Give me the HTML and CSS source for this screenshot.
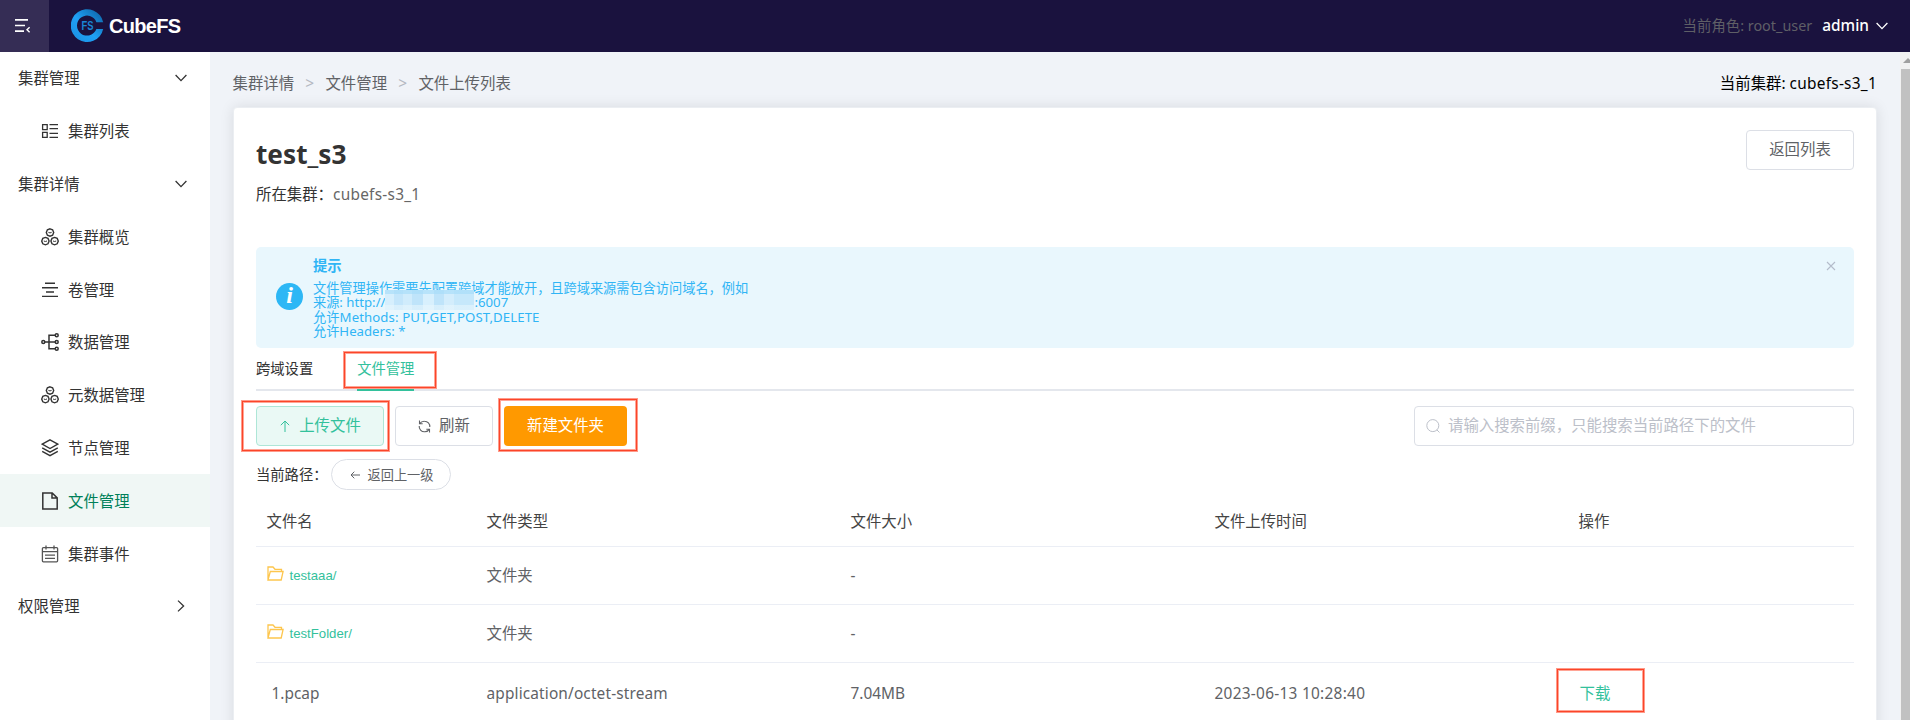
FILE: index.html
```html
<!DOCTYPE html>
<html lang="zh-CN">
<head>
<meta charset="utf-8">
<title>CubeFS</title>
<link rel="stylesheet" href="styles.css">
</head>
<body>
<svg class="defs" width="0" height="0">
  <symbol id="down" viewBox="0 0 12 8"><path d="M.6 1 6 6.6 11.4 1" fill="none" stroke="currentColor" stroke-width="1.3"/></symbol>
  <symbol id="cluster" viewBox="0 0 18 18"><g fill="none" stroke="currentColor" stroke-width="1.4"><path d="M9 .8l2.6 1 1.1 2.7-1.1 2.7-2.6 1-2.6-1-1.1-2.7 1.1-2.7zM4.4 9.4l2.6 1 1.1 2.7L7 15.8l-2.6 1-2.6-1L.7 13.1l1.1-2.7zM13.6 9.4l2.6 1 1.1 2.7-1.1 2.7-2.6 1-2.6-1-1.1-2.7 1.1-2.7z"/><path d="M7.4 4.4q1.6 1 3.2 0M2.8 13q1.6 1 3.2 0M12 13q1.6 1 3.2 0" stroke-width="1"/></g></symbol>
  <symbol id="folder" viewBox="0 0 17 15"><path d="M1 14V1h5l2 2.3h6.5v2.2M1 14l2.3-8.5h12.8L14.2 14z" fill="none" stroke="#fdc64e" stroke-width="1.3"/></symbol>
</svg>
<header class="topbar">
  <div class="toggle"><svg width="16" height="14" viewBox="0 0 16 14"><path d="M0 .9h13M0 6.5h10M0 12.2h9" stroke="#fff" stroke-width="1.7"/><path d="M14.6 8.3 12 10.8l2.6 2.5" fill="none" stroke="#fff" stroke-width="1.4"/></svg></div>
  <svg class="logo" width="33" height="34" viewBox="0 0 33 34">
    <defs><linearGradient id="lg" x1="0" y1="1" x2="1" y2="0"><stop offset="0" stop-color="#1b8fe0"/><stop offset=".45" stop-color="#1fa0f5"/><stop offset="1" stop-color="#0b5e9e"/></linearGradient></defs>
    <path d="M32.2 13.2A16.4 16.4 0 1 0 32.2 20H25.4A10 10 0 1 1 25.4 13.2Z" fill="url(#lg)"/>
    <text x="10.4" y="21" class="logo-fs" textLength="12" lengthAdjust="spacingAndGlyphs">FS</text>
  </svg>
  <span class="brand">CubeFS</span>
  <div class="user"><span class="role">当前角色: root_user</span><b>admin</b><svg width="12" height="8"><use href="#down"/></svg></div>
</header>
<div class="body">
<nav class="side">
  <div class="group">集群管理<svg width="12" height="8"><use href="#down"/></svg></div>
  <div class="item"><svg width="18" height="18" viewBox="0 0 18 18"><g fill="none" stroke="currentColor" stroke-width="1.3"><path d="M1.6 2.6h4.6v5H1.6zM1.6 10.4h4.6v5H1.6z"/><path d="M8.5 2.6h8.5M8.5 6.6h8.5M8.5 11.4h8.5M8.5 15.4h8.5"/></g></svg>集群列表</div>
  <div class="group">集群详情<svg width="12" height="8"><use href="#down"/></svg></div>
  <div class="item"><svg width="18" height="18"><use href="#cluster"/></svg>集群概览</div>
  <div class="item"><svg width="18" height="18" viewBox="0 0 18 18"><path d="M4 2.2h10M1 6.8h16M5 11h8M1 15.4h16" stroke="currentColor" stroke-width="1.4"/></svg>卷管理</div>
  <div class="item"><svg width="18" height="18" viewBox="0 0 18 18"><g fill="none" stroke="currentColor" stroke-width="1.5"><circle cx="2.3" cy="9" r="1.5"/><circle cx="15.7" cy="2.3" r="1.5"/><circle cx="15.7" cy="9" r="1.5"/><circle cx="15.7" cy="15.7" r="1.5"/><path d="M3.8 9h10.4M14.2 2.3H8v13.4h6.2"/></g></svg>数据管理</div>
  <div class="item"><svg width="18" height="18"><use href="#cluster"/></svg>元数据管理</div>
  <div class="item"><svg width="18" height="18" viewBox="0 0 18 18"><g fill="none" stroke="currentColor" stroke-width="1.4"><path d="M9 .9l7.8 4.3L9 9.5 1.2 5.2zM1.2 8.8L9 13.1l7.8-4.3M1.2 12.4L9 16.7l7.8-4.3"/></g></svg>节点管理</div>
  <div class="item active"><svg width="18" height="18" viewBox="0 0 18 18"><path d="M1.8.9h9.4l5 5v11.2H1.8zM11 .9v5.2h5.2" fill="none" stroke="#333" stroke-width="1.5"/></svg>文件管理</div>
  <div class="item"><svg width="18" height="18" viewBox="0 0 18 18"><g fill="none" stroke="#555" stroke-width="1.3"><rect x="1.4" y="2.6" width="15.2" height="14.2" rx="1"/><path d="M1.4 6.7h15.2M5 .4v4M13 .4v4M4 10.2h10M4 13.4h10"/></g></svg>集群事件</div>
  <div class="group">权限管理<svg class="right" width="12" height="8"><use href="#down"/></svg></div>
</nav>
<main class="main">
  <div class="crumbs"><span>集群详情</span><em>&gt;</em><span>文件管理</span><em>&gt;</em><span>文件上传列表</span><div class="current">当前集群: <i>cubefs-s3_1</i></div></div>
  <section class="card">
    <div class="head"><div><h1>test_s3</h1><p>所在集群：<i>cubefs-s3_1</i></p></div><button class="btn back">返回列表</button></div>
    <div class="alert">
      <span class="info">i</span>
      <div class="tip"><strong>提示</strong>
        <div>文件管理操作需要先配置跨域才能放开，且跨域来源需包含访问域名，例如</div>
        <div class="source">来源: http://<span class="mosaic"></span>:6007</div>
        <div class="methods">允许Methods: PUT,GET,POST,DELETE</div>
        <div>允许Headers: *</div></div>
      <svg class="close" width="10" height="10" viewBox="0 0 10 10"><path d="M1 1l8 8M9 1L1 9" stroke="#b4bcca" stroke-width="1.1"/></svg>
    </div>
    <div class="tabs"><span>跨域设置</span><span class="on">文件管理<i class="mark mark-tab"></i></span></div>
    <div class="tools">
      <button class="btn upload"><svg width="10" height="12" viewBox="0 0 10 12"><path d="M5 12V1M.8 5.2 5 1l4.2 4.2" fill="none" stroke="currentColor"/></svg>上传文件<i class="mark mark-upload"></i></button>
      <button class="btn refresh"><svg width="13" height="13" viewBox="0 0 13 13"><path d="M1.5 .6v3.2h3.2M1.8 3.6A5.2 5.2 0 0 1 6.5 1.2 5.3 5.3 0 0 1 11.8 7M11.5 12.4V9.2H8.3M11.2 9.4a5.2 5.2 0 0 1-4.7 2.4A5.3 5.3 0 0 1 1.2 6" fill="none" stroke="currentColor" stroke-width="1.1"/></svg>刷新</button>
      <button class="btn create">新建文件夹<i class="mark mark-create"></i></button>
      <div class="search"><svg width="14" height="14" viewBox="0 0 14 14"><circle cx="6.8" cy="6.6" r="6" fill="none" stroke="currentColor"/><path d="M10.8 10.8l2.7 2.7" stroke="currentColor"/></svg><span>请输入搜索前缀，只能搜索当前路径下的文件</span></div>
    </div>
    <div class="path">当前路径：<button class="pill"><svg width="10" height="8" viewBox="0 0 10 8"><path d="M10 4H1M4.3.7 1 4l3.3 3.3" fill="none" stroke="currentColor"/></svg>返回上一级</button></div>
    <div class="table">
      <div class="row th"><span>文件名</span><span>文件类型</span><span>文件大小</span><span>文件上传时间</span><span>操作</span></div>
      <div class="row"><span class="folder"><svg width="17" height="15"><use href="#folder"/></svg>testaaa/</span><span>文件夹</span><span>-</span><span></span><span></span></div>
      <div class="row"><span class="folder"><svg width="17" height="15"><use href="#folder"/></svg>testFolder/</span><span>文件夹</span><span>-</span><span></span><span></span></div>
      <div class="row last"><span class="file">1.pcap</span><span class="type">application/octet-stream</span><span>7.04MB</span><span class="time">2023-06-13 10:28:40</span><span class="download">下载<i class="mark mark-download"></i></span></div>
    </div>
  </section>
</main>
<div class="scroll"><svg width="10" height="17" viewBox="0 0 10 17"><path d="M3 11l5-5 5 5z" fill="#a0a0a0"/></svg><div class="thumb"></div></div>
</div>
</body>
</html>
```
FILE: styles.css
```css
* { box-sizing: border-box; }
body { margin: 0; width: 1910px; height: 720px; overflow: hidden; font: 15.4px/20px "Noto Sans", "Noto Sans CJK SC", sans-serif; font-weight: 400; color: #333; }
i { font-style: normal; }
button { font: inherit; margin: 0; }
svg { flex: none; display: block; }
.defs { position: absolute; }
.topbar { height: 52px; background: #1a123e; display: flex; align-items: center; color: #fff; }
.toggle { width: 49px; height: 52px; background: #352d55; padding: 19px 0 0 15px; }
.logo { margin-left: 22px; }
.logo-fs { font: bold 12px "Liberation Sans", sans-serif; fill: #1a86d4; }
.brand { margin-left: 5px; font: bold 20px/24px "Liberation Sans", sans-serif; letter-spacing: -.7px; }
.user { margin-left: auto; padding-right: 22px; display: flex; align-items: center; }
.role { color: #5f5f66; font-size: 14.4px; }
.user b { font-weight: 500; margin: 0 7px 0 10px; }
.body { display: flex; height: 668px; background: #f0f3f8; }
.side { width: 210px; background: #fff; }
.group, .item { height: 52.8px; display: flex; align-items: center; padding-top: 2px; }
.group { padding-left: 18px; padding-right: 23px; justify-content: space-between; }
.group svg, .item svg { margin-bottom: 2px; }
.right { transform: rotate(-90deg); }
.item { padding-left: 41px; gap: 9px; }
.active { background: #f0f7f5; color: #008059; }
.main { flex: 1; padding: 0 23px; }
.crumbs { height: 55px; display: flex; align-items: center; padding-top: 8px; color: #606266; margin-left: -.5px; }
.crumbs em { font-style: normal; color: #b5b9c2; width: 31.4px; text-align: center; }
.current { margin-left: auto; color: #000; }
.current i, .head i { letter-spacing: .27px; }
.card { height: 640px; background: #fff; border: 1px solid #ebeef2; border-radius: 4px; box-shadow: 0 0 14px rgba(0,0,0,.1); padding: 22px; }
.head { display: flex; justify-content: space-between; height: 117px; }
h1 { margin: 7px 0 0; font-size: 26.2px; line-height: 34px; font-weight: 700; }
.head p { margin: 14px 0 0; }
.head p i { color: #666; }
.btn { height: 40px; border: 1px solid #dcdfe6; border-radius: 4px; background: #fff; color: #606266; display: flex; align-items: center; justify-content: center; padding: 0; }
.back { width: 108px; }
.alert { height: 101px; background: #e9f7fd; border-radius: 5px; color: #30b5f5; display: flex; padding: 9px 18px 0 20px; }
.info { width: 27px; height: 27px; margin: 27px 10px 0 0; border-radius: 50%; background: #2db7f5; color: #fff; font: italic bold 24px/25px "Liberation Serif", serif; text-align: center; }
.tip { font-size: 13.2px; line-height: 14.5px; }
.tip strong { display: block; font-size: 14.3px; line-height: 20px; margin-bottom: 4.5px; }
.source { display: flex; white-space: pre; }
.methods { letter-spacing: .1px; }
.mosaic { width: 89px; height: 20px; margin: -5px 0 -9px; background: linear-gradient(#a5dcf9a0 0 4px, transparent 4px 15px, #e9f7fd90 15px), linear-gradient(90deg, #d6effd 0 10%, #c4e6fb 10% 20%, #d0ecfc 20% 30%, #bfe4fa 30% 43%, #d8f0fd 43% 55%, #bfe4fa 55% 66%, #d3edfc 66% 77%, #c6e8fb 77%); }
.close { margin: 5px 0 0 auto; }
.tabs { height: 43px; border-bottom: 2px solid #e4e7ed; display: flex; gap: 44px; font-size: 14.3px; }
.tabs span { position: relative; height: 43px; line-height: 42px; }
.tabs .on { color: #33c19c; border-bottom: 2px solid #33c19c; }
.tools { margin-top: 15px; height: 40px; display: flex; }
.tools .btn { position: relative; }
.tools .upload { width: 128px; gap: 9px; padding-left: 1px; background: #eaf9f5; border-color: #aee6d7; color: #33c19c; }
.refresh { width: 98px; margin: 0 11px; gap: 8px; }
.tools .create { width: 123px; background: #f90; border: 0; color: #fff; }
.search { width: 440px; margin-left: auto; border: 1px solid #dcdfe6; border-radius: 4px; display: flex; align-items: center; padding-left: 11px; gap: 8px; color: #bcc0c9; }
.path { margin-top: 13px; height: 31px; display: flex; align-items: center; font-size: 14.3px; }
.pill { margin-left: 4px; width: 120px; height: 31px; border: 1px solid #dcdfe6; border-radius: 16px; background: #fff; color: #606266; font-size: 13.2px; display: flex; align-items: center; justify-content: center; gap: 8px; padding: 0; }
.table { margin-top: 6px; }
.row { display: grid; grid-template-columns: 220px 364px 364px 364px 1fr; height: 58px; align-items: center; border-bottom: 1px solid #ebeef5; color: #606266; padding: 1px 0 0 10.5px; }
.row.th { height: 51px; color: #444; padding-top: 2px; }
.row.last { height: 61px; padding-top: 2px; }
.folder { display: flex; align-items: center; gap: 6px; font: 13.2px "Liberation Sans", sans-serif; color: #33c19c; padding-bottom: 2px; }
.folder svg { margin-bottom: 4px; }
.file { padding-left: 5px; }
.type { letter-spacing: .15px; }
.time { letter-spacing: .28px; }
.download { position: relative; color: #33c19c; padding-left: 1px; }
.mark { position: absolute; border: 1px solid #fb4529; box-shadow: 0 0 0 1px #ff9a8a, inset 0 0 0 1px #ffa596; }
.mark-tab { left: -13px; top: 4px; width: 92px; height: 36px; }
.mark-upload { left: -15px; top: -6px; width: 147px; height: 50px; }
.mark-create { left: -5px; top: -7px; width: 138px; height: 52px; }
.mark-download { left: -22px; top: -15px; width: 87px; height: 43px; }
.scroll { width: 10px; background: #f1f1f1; }
.thumb { height: 651px; background: #c1c1c1; margin-left: 1px; }
```
